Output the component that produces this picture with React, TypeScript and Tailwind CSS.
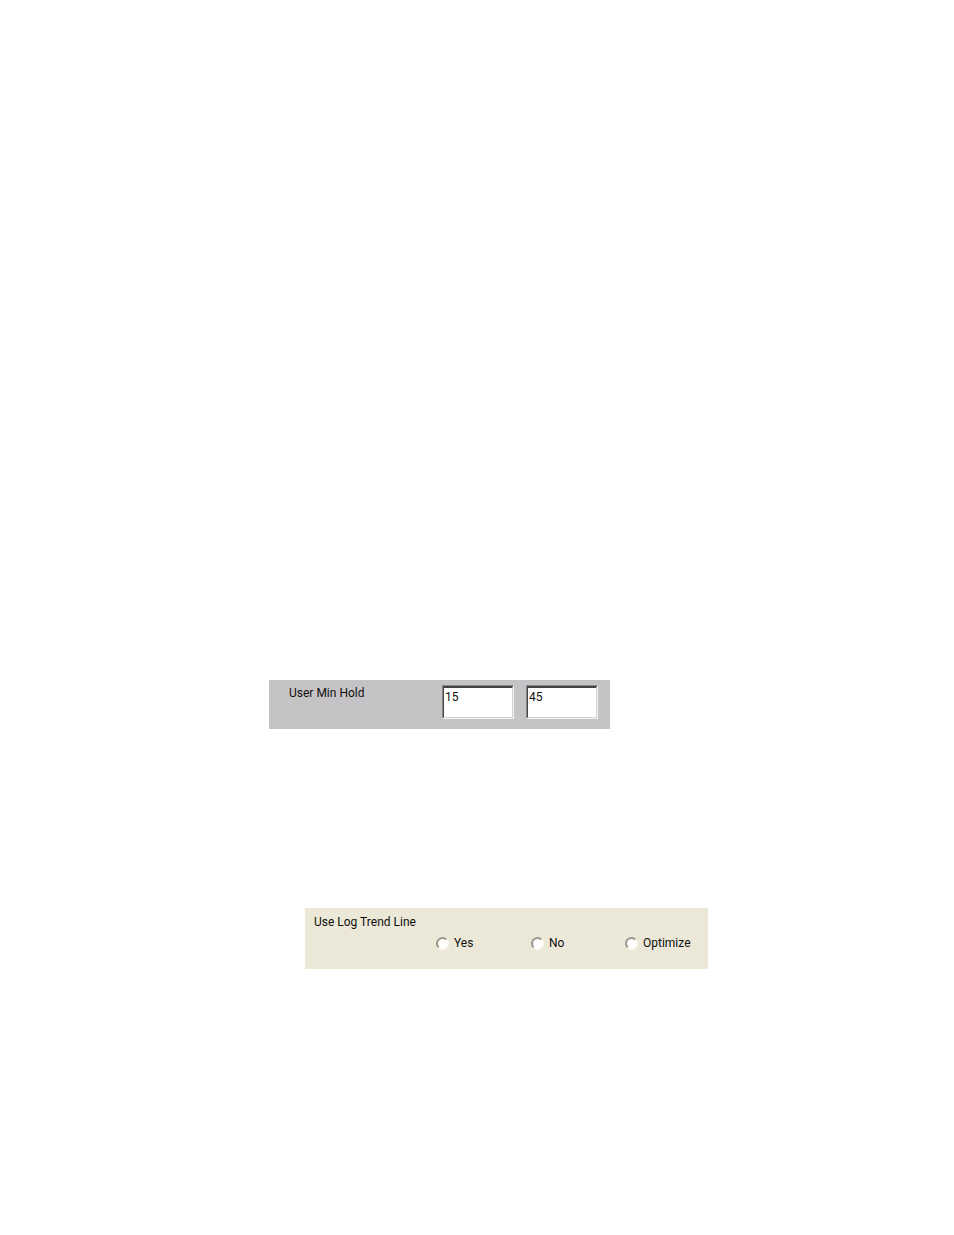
import { useState } from "react";

const trendOptions = ["Yes", "No", "Optimize"];

type HoldFieldProps = {
  label: string;
  value: string;
  onChange: (value: string) => void;
};

function HoldField({ label, value, onChange }: HoldFieldProps) {
  return (
    <div className="h-[34px] w-[72px] border border-t-[#8a888c] border-l-[#8a888c] border-r-[#f4f3f5] border-b-[#f4f3f5]">
      <input
        type="text"
        aria-label={label}
        value={value}
        onChange={(event) => onChange(event.target.value)}
        className="block h-full w-full border border-t-2 border-t-[#454246] border-l-[#454246] border-r-[#d2d0d3] border-b-[#d2d0d3] bg-white px-px pb-3 text-[12px] leading-4 text-[#101010] outline-none"
      />
    </div>
  );
}

function MinHoldPanel() {
  const [low, setLow] = useState("15");
  const [high, setHigh] = useState("45");

  return (
    <section className="ml-[269px] flex max-w-[341px] justify-between bg-[#c5c3c6] pt-[5px] pr-3 pb-[10px] pl-5">
      <span id="min-hold" className="whitespace-nowrap">
        User Min Hold
      </span>
      <div role="group" aria-labelledby="min-hold" className="flex gap-3">
        <HoldField label="User Min Hold lower" value={low} onChange={setLow} />
        <HoldField label="User Min Hold upper" value={high} onChange={setHigh} />
      </div>
    </section>
  );
}

function TrendLinePanel() {
  const [choice, setChoice] = useState("");

  return (
    <section
      role="radiogroup"
      aria-labelledby="trend-line"
      className="ml-[305px] max-w-[403px] bg-[#ebe8d7] pt-[6px] pr-4 pb-[18px] pl-[9px]"
    >
      <div id="trend-line">Use Log Trend Line</div>
      <div className="mt-[5px] grid grid-cols-[95px_94px_auto] pl-[122px]">
        {trendOptions.map((option) => (
          <label key={option} className="flex items-center gap-[5px]">
            <input
              type="radio"
              name="trend-line"
              value={option}
              checked={choice === option}
              onChange={() => setChoice(option)}
              className="size-[13px] shrink-0 appearance-none rounded-full border-2 border-t-[#98958a] border-l-[#98958a] border-r-[#fbfaf4] border-b-[#fbfaf4] bg-white checked:bg-[#202020]"
            />
            {option}
          </label>
        ))}
      </div>
    </section>
  );
}

export default function App() {
  return (
    <main className="min-h-screen bg-white pt-[680px] font-['Roboto','Liberation_Sans',sans-serif] text-[12px] leading-4 text-[#101010]">
      <MinHoldPanel />
      <div className="mt-[179px]">
        <TrendLinePanel />
      </div>
    </main>
  );
}
